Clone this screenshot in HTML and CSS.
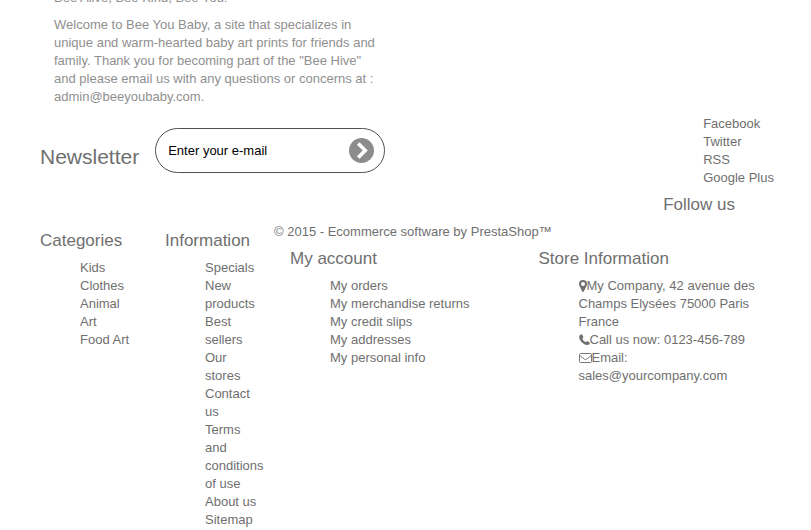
FILE: index.html
```html
<!DOCTYPE html>
<html lang="en">

<head>
    <meta charset="UTF-8">
    <meta name="viewport" content="width=device-width, initial-scale=1.0">
    <title>Bee You Baby</title>
    <link rel="stylesheet" href="styles.css">
</head>

<body>
    <div class="intro">
        <p>Bee Alive, Bee Kind, Bee You!</p>
        <p>Welcome to Bee You Baby, a site that specializes in unique and warm-hearted baby art prints for friends and
            family. Thank you for becoming part of the "Bee Hive" and please email us with any questions or concerns at
            : admin@beeyoubaby.com.</p>
    </div>

    <footer class="footer">
        <div class="footer-top">
            <form class="newsletter">
                <label class="newsletter-title" for="newsletter-input">Newsletter</label>
                <div class="newsletter-field">
                    <input id="newsletter-input" type="text" name="email" placeholder="Enter your e-mail">
                    <button type="button" aria-label="Subscribe">
                        <svg viewBox="0 0 25 25" width="25" height="25">
                            <circle cx="12.5" cy="12.5" r="12.5" fill="#8c8c8c" />
                            <path d="M10.500 6.800L16.200 12.500L10.500 18.200" fill="none" stroke="#fff" stroke-width="3.600" stroke-linecap="square" />
                        </svg>
                    </button>
                </div>
            </form>

            <section class="social">
                <ul>
                    <li><a href="#">Facebook</a></li>
                    <li><a href="#">Twitter</a></li>
                    <li><a href="#">RSS</a></li>
                    <li><a href="#">Google Plus</a></li>
                </ul>
                <h4>Follow us</h4>
            </section>
        </div>

        <div class="footer-links">
            <section>
                <h4>Categories</h4>
                <ul>
                    <li><a href="#">Kids</a></li>
                    <li><a href="#">Clothes</a></li>
                    <li><a href="#">Animal</a></li>
                    <li><a href="#">Art</a></li>
                    <li><a href="#">Food Art</a></li>
                </ul>
            </section>

            <section class="information">
                <h4>Information</h4>
                <ul>
                    <li><a href="#">Specials</a></li>
                    <li><a href="#">New products</a></li>
                    <li><a href="#">Best sellers</a></li>
                    <li><a href="#">Our stores</a></li>
                    <li><a href="#">Contact us</a></li>
                    <li><a href="#">Terms and conditions of use</a></li>
                    <li><a href="#">About us</a></li>
                    <li><a href="#">Sitemap</a></li>
                </ul>
            </section>

            <div class="footer-main">
                <div class="copyright"><a href="#">© 2015 - Ecommerce software by PrestaShop™</a></div>
                <div class="footer-columns">
                    <section>
                        <h4>My account</h4>
                        <ul>
                            <li><a href="#">My orders</a></li>
                            <li><a href="#">My merchandise returns</a></li>
                            <li><a href="#">My credit slips</a></li>
                            <li><a href="#">My addresses</a></li>
                            <li><a href="#">My personal info</a></li>
                        </ul>
                    </section>

                    <section>
                        <h4>Store Information</h4>
                        <ul>
                            <li><svg class="icon" viewBox="0 0 8 13" width="8" height="13"><path fill-rule="evenodd" d="M4 1a4 4 0 0 1 4 4c0 .8-.2 1.3-.5 1.9L4.8 12.4a.9.9 0 0 1-1.6 0L.5 6.900C.2 6.300 0 5.800 0 5a4 4 0 0 1 4-4zM4 3a2 2 0 1 0 0 4a2 2 0 0 0 0-4z" /></svg>My Company, 42 avenue des Champs Elysées 75000 Paris France</li>
                            <li><svg class="icon" viewBox="0 0 11 13" width="11" height="13"><path d="M2.300 1.500L3 1.300L4.500 4.200L3.300 5.600C4 7.300 5.200 8.400 6.800 9.200L8.100 7.900L10.800 9.400C10.700 11.100 9.800 11.900 8.400 11.900C4.300 11.900 .2 7.700 .2 4C.2 2.700 1 1.800 2.300 1.500Z" /></svg>Call us now: 0123-456-789</li>
                            <li><svg class="icon" viewBox="0 0 13 13" width="13" height="13"><path d="M1.500 2.500h10a1 1 0 0 1 1 1v7a1 1 0 0 1-1 1h-10a1 1 0 0 1-1-1v-7a1 1 0 0 1 1-1zM.5 4.200L5.300 8.100Q6.500 9 7.700 8.100L12.500 4.200" fill="none" stroke="#777" /></svg>Email: <a href="#">sales@yourcompany.com</a></li>
                        </ul>
                    </section>
                </div>
            </div>
        </div>
    </footer>
</body>

</html>
```
FILE: styles.css
```css
body {
    margin: 0;
    background-color: #fff;
    font-family: "Liberation Sans", Arial, Helvetica, sans-serif;
    font-size: 13px;
    line-height: 18px;
    color: #6f6f6f;
}

a {
    color: #6f6f6f;
    text-decoration: none;
}

a:hover {
    color: #515151;
}

ul {
    margin: 0;
    padding: 0 0 0 40px;
    list-style: none;
}

h4 {
    margin: 9px 0;
    font-size: 17px;
    font-weight: normal;
    line-height: 18px;
    color: #6f6f6f;
}

/* the page is scrolled so the tagline is cut by the top edge */
.intro {
    max-width: 330px;
    margin-top: -11px;
    padding-left: 54px;
    color: #8f8f8f;
}

.intro p {
    margin: 0 0 9px;
}

.footer {
    padding: 0 40px;
}

.footer-top {
    display: flex;
    justify-content: space-between;
    margin-right: -3px;
}

.newsletter {
    display: flex;
    align-items: center;
    align-self: flex-start;
    gap: 16px;
    padding-top: 13px;
}

.newsletter-title {
    padding-top: 12px;
    font-size: 21px;
    line-height: 24px;
}

.newsletter-field {
    display: flex;
    align-items: center;
    box-sizing: border-box;
    width: 230px;
    height: 45px;
    padding: 0 10px 0 12px;
    border: 1px solid #515151;
    border-radius: 23px;
}

.newsletter-field input {
    flex: 1;
    min-width: 0;
    padding: 0;
    border: none;
    outline: none;
    background: none;
    font-family: inherit;
    font-size: 13px;
    color: #000;
}

.newsletter-field input::placeholder {
    color: #000;
    opacity: 1;
}

.newsletter-field button {
    display: flex;
    padding: 0;
    border: none;
    background: none;
    cursor: pointer;
}

.footer-links {
    display: grid;
    grid-template-columns: 125px 109px 1fr;
}

.information {
    padding-right: 9px;
}

.footer-columns {
    display: grid;
    grid-template-columns: 1fr 1fr;
    gap: 16px;
    padding-left: 16px;
}

.icon {
    vertical-align: -2px;
    fill: #6f6f6f;
}
```
